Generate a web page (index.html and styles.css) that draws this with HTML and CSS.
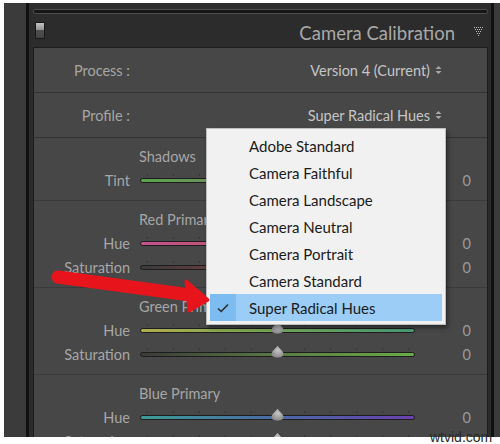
FILE: index.html
```html
<!DOCTYPE html>
<html lang="en">
<head>
    <meta charset="UTF-8">
    <meta name="viewport" content="width=device-width, initial-scale=1.0">
    <title>Camera Calibration</title>
    <link rel="stylesheet" href="styles.css">
</head>
<body>
    <div class="screen">
        <div class="rail"></div>

        <div class="panel">
            <div class="slot"></div>

            <div class="panel-head">
                <span class="toggle"></span>
                <h2 class="panel-title">Camera Calibration</h2>
                <svg class="collapse" width="9" height="10" viewBox="0 0 9 10">
                    <g fill="#b8b8b8">
                        <rect x="0" y="0" width="1" height="1"/><rect x="2" y="0" width="1" height="1"/><rect x="4" y="0" width="1" height="1"/><rect x="6" y="0" width="1" height="1"/><rect x="8" y="0" width="1" height="1"/>
                        <rect x="1" y="2" width="1" height="1"/><rect x="3" y="2" width="1" height="1"/><rect x="5" y="2" width="1" height="1"/><rect x="7" y="2" width="1" height="1"/>
                        <rect x="2" y="4" width="1" height="1"/><rect x="4" y="4" width="1" height="1"/><rect x="6" y="4" width="1" height="1"/>
                        <rect x="3" y="6" width="1" height="1"/><rect x="5" y="6" width="1" height="1"/>
                        <rect x="4" y="8" width="1" height="1"/>
                    </g>
                </svg>
            </div>

            <div class="panel-body">
                <div class="field-row">
                    <span class="field-label">Process :</span>
                    <span class="field-value">Version 4 (Current)
                        <svg class="updown" width="7" height="10" viewBox="0 0 7 10"><path d="M0.5 4 L3.5 1 L6.5 4 Z M0.5 6 L3.5 9 L6.5 6 Z" fill="#a8a8a8"/></svg>
                    </span>
                </div>
                <div class="field-row">
                    <span class="field-label">Profile :</span>
                    <span class="field-value">Super Radical Hues
                        <svg class="updown" width="7" height="10" viewBox="0 0 7 10"><path d="M0.5 4 L3.5 1 L6.5 4 Z M0.5 6 L3.5 9 L6.5 6 Z" fill="#a8a8a8"/></svg>
                    </span>
                </div>

                <div class="group">
                    <div class="group-title">Shadows</div>
                    <div class="slider-row">
                        <span class="slider-label">Tint</span>
                        <div class="slider tint"><span class="thumb"></span></div>
                        <span class="slider-value">0</span>
                    </div>
                </div>

                <div class="group">
                    <div class="group-title">Red Primary</div>
                    <div class="slider-row">
                        <span class="slider-label">Hue</span>
                        <div class="slider red-hue"><span class="thumb"></span></div>
                        <span class="slider-value">0</span>
                    </div>
                    <div class="slider-row">
                        <span class="slider-label">Saturation</span>
                        <div class="slider red-sat"><span class="thumb"></span></div>
                        <span class="slider-value">0</span>
                    </div>
                </div>

                <div class="group">
                    <div class="group-title">Green Primary</div>
                    <div class="slider-row">
                        <span class="slider-label">Hue</span>
                        <div class="slider green-hue"><span class="thumb"></span></div>
                        <span class="slider-value">0</span>
                    </div>
                    <div class="slider-row">
                        <span class="slider-label">Saturation</span>
                        <div class="slider green-sat"><span class="thumb"></span></div>
                        <span class="slider-value">0</span>
                    </div>
                </div>

                <div class="group">
                    <div class="group-title">Blue Primary</div>
                    <div class="slider-row">
                        <span class="slider-label">Hue</span>
                        <div class="slider blue-hue"><span class="thumb"></span></div>
                        <span class="slider-value">0</span>
                    </div>
                    <div class="slider-row">
                        <span class="slider-label">Saturation</span>
                        <div class="slider blue-sat"><span class="thumb"></span></div>
                        <span class="slider-value">0</span>
                    </div>
                </div>
            </div>
        </div>

        <div class="rail-edge"></div>
    </div>

    <ul class="profile-menu">
        <li class="menu-item"><span class="menu-check"></span>Adobe Standard</li>
        <li class="menu-item"><span class="menu-check"></span>Camera Faithful</li>
        <li class="menu-item"><span class="menu-check"></span>Camera Landscape</li>
        <li class="menu-item"><span class="menu-check"></span>Camera Neutral</li>
        <li class="menu-item"><span class="menu-check"></span>Camera Portrait</li>
        <li class="menu-item"><span class="menu-check"></span>Camera Standard</li>
        <li class="menu-item selected">
            <span class="menu-check">
                <svg width="12" height="10" viewBox="0 0 12 10"><path d="M1 5.5 L4.2 8.5 L11 1.5" fill="none" stroke="#2b2b2b" stroke-width="1.6"/></svg>
            </span>Super Radical Hues
        </li>
    </ul>

    <!-- red callout arrow pointing at the checked profile -->
    <svg class="callout" width="500" height="444" viewBox="0 0 500 444">
        <line x1="58" y1="277" x2="190" y2="295" stroke="#e8141b" stroke-width="13" stroke-linecap="round"/>
        <path d="M186 281 L208 300 L189 311 Z" fill="#e8141b" stroke="#e8141b" stroke-width="3" stroke-linejoin="round"/>
    </svg>

    <span class="watermark">wtvid.com</span>
</body>
</html>
```

FILE: styles.css
```css
* {
    margin: 0;
    padding: 0;
    box-sizing: border-box;
}

body {
    width: 500px;
    height: 444px;
    background: #fff;
    font-family: Lato, 'Open Sans', sans-serif;
    overflow: hidden;
    position: relative;
}

.screen {
    display: flex;
    margin: 3px 0 0 4px;
    height: 434px;
    overflow: hidden;
}

.rail {
    width: 25px;
    background: #3b3b3b;
    border-right: 3px solid #111;
}

.rail-edge {
    width: 9px;
    background: #3b3b3b;
    border-left: 3px solid #111;
}

.panel {
    flex: 1;
    background: #2c2c2c;
    padding: 0 3px 0 4px;
}

.slot {
    margin-top: 6px;
    height: 5px;
    border: 1px solid #4c4c4c;
    border-radius: 2px;
    background: #161616;
}

.panel-head {
    display: flex;
    align-items: center;
    height: 33px;
    padding: 0 5px 0 2px;
}

.toggle {
    width: 10px;
    height: 17px;
    border: 1px solid #181818;
    border-radius: 1px;
    background: linear-gradient(#c2c2c2, #8d8d8d 50%, #4e4e4e 50%, #444);
}

.panel-title {
    margin: 4px 19px 0 auto;
    font-size: 18.5px;
    font-weight: 400;
    color: #a8a8a8;
}

.collapse {
    margin-top: 3px;
}

.panel-body {
    border: 1px solid #1c1c1c;
    background: #474747;
}

.field-row {
    display: flex;
    align-items: center;
    height: 45px;
    border-bottom: 1px solid #333;
    font-size: 14.5px;
}

.field-label {
    width: 96px;
    text-align: right;
    color: #a6a6a6;
}

.field-value {
    display: flex;
    align-items: center;
    gap: 5px;
    margin-left: auto;
    padding-right: 45px;
    color: #c6c6c6;
}

.group {
    padding: 8px 0;
    border-bottom: 1px solid #3a3a3a;
    font-size: 14.5px;
}

.group-title {
    height: 22px;
    line-height: 22px;
    padding-left: 105px;
    color: #a6a6a6;
}

.slider-row {
    display: flex;
    align-items: center;
    height: 24px;
}

.slider-label {
    width: 96px;
    margin-right: 10px;
    text-align: right;
    color: #a6a6a6;
}

.slider {
    position: relative;
    width: 275px;
    height: 5px;
    border: 1px solid #1d1d1d;
    border-radius: 3px;
}

/* tick marks above each track */
.slider::before {
    content: "";
    position: absolute;
    left: 6px;
    top: -5px;
    width: 263px;
    height: 2px;
    background: repeating-linear-gradient(to right, #353535 0 1px, transparent 1px 26.1px);
}

.thumb {
    position: absolute;
    left: calc(50% - 7px);
    top: -7px;
    width: 14px;
    height: 12px;
    background: radial-gradient(circle at 50% 35%, #c8c8c8, #8a8a8a 70%);
    clip-path: path("M7 0 C8.5 3 13 5.5 13 8.5 C13 11 10.5 12 7 12 C3.5 12 1 11 1 8.5 C1 5.5 5.5 3 7 0 Z");
}

.slider-value {
    flex: 1;
    text-align: right;
    padding-right: 16px;
    color: #9a9a9a;
}

.tint { background: linear-gradient(to right, #5aa54a, #7e7e6a, #b04a9a); }
.red-hue { background: linear-gradient(to right, #c2548e, #c05060 50%, #c08040); }
.red-sat { background: linear-gradient(to right, #3a3a3a, #8a4040 50%, #c03030); }
.green-hue { background: linear-gradient(to right, #b0ac4c, #74a858 50%, #4a9c7a); }
.green-sat { background: linear-gradient(to right, #3a3a3a, #5a7a44 50%, #6aac48); }
.blue-hue { background: linear-gradient(to right, #3c9c96, #4a6aa6 50%, #6a40b0); }
.blue-sat { background: linear-gradient(to right, #3a3a3a, #4a5a8a 50%, #4a60c0); }

.profile-menu {
    position: absolute;
    left: 206px;
    top: 128px;
    width: 240px;
    padding: 3px;
    list-style: none;
    background: #f1f1f1;
    border: 1px solid #bdbdbd;
    box-shadow: 2px 3px 4px rgba(0, 0, 0, 0.4);
    font-size: 15px;
    color: #1b1b1b;
}

.menu-item {
    display: flex;
    align-items: center;
    height: 27px;
}

.menu-check {
    display: flex;
    align-items: center;
    justify-content: center;
    width: 26px;
    height: 100%;
    margin-right: 13px;
}

.menu-item.selected {
    background: #9bcdf6;
}

.menu-item.selected .menu-check {
    background: #7dbcf0;
}

.callout {
    position: absolute;
    left: 0;
    top: 0;
    pointer-events: none;
}

.watermark {
    position: absolute;
    left: 430px;
    top: 429px;
    font-family: 'Liberation Sans', sans-serif;
    font-size: 14px;
    color: #2a2a2a;
}
```
